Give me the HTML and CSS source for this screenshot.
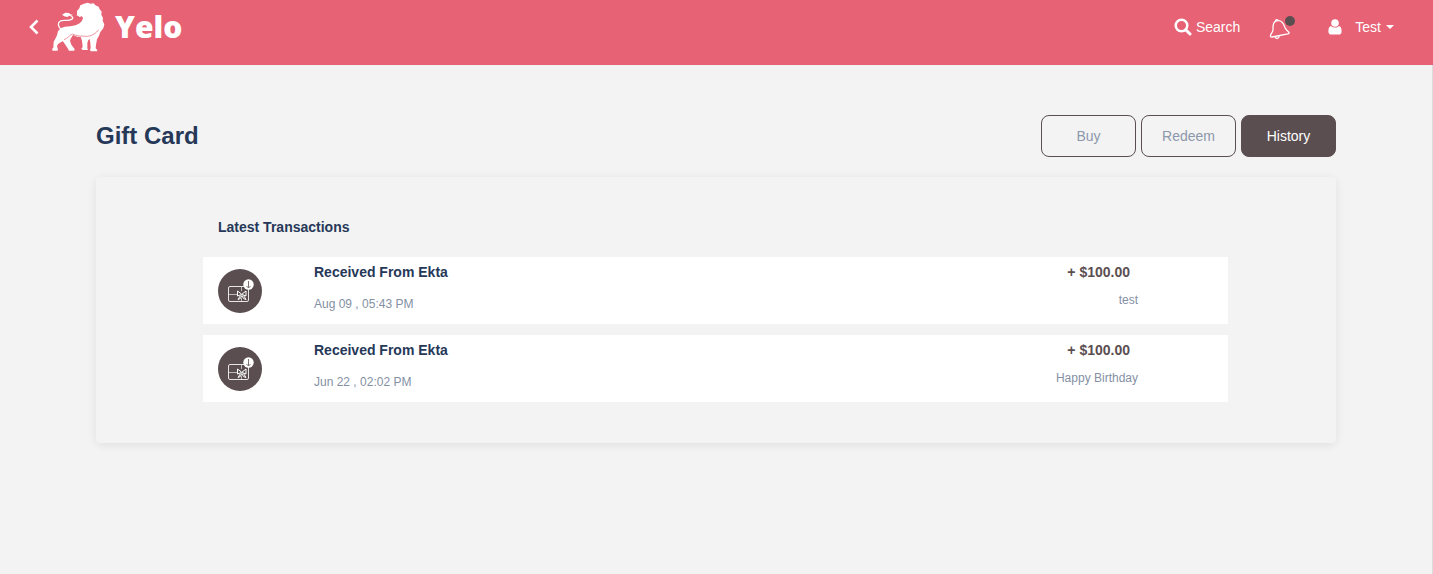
FILE: index.html
```
<!DOCTYPE html>
<html lang="en">
<head>
    <meta charset="UTF-8">
    <meta name="viewport" content="width=device-width, initial-scale=1">
    <title>Gift Card</title>
    <link rel="stylesheet" href="styles.css">
</head>
<body>

<!-- shared by every transaction row -->
<svg class="symbols" aria-hidden="true">
    <symbol id="gift-card" viewBox="0 0 44 44">
        <g fill="none" stroke="#fff" stroke-width="1">
            <rect x="10.5" y="17.500" width="20" height="15" rx="1.500" opacity=".85"/>
            <path d="M10.5 25.500H19M23.5 18V22M23.500 29V33" opacity=".6"/>
            <path d="M23.500 25L19.500 22V27L23.500 25.500L28 22V27L24 25.500M22.500 26.500L20 30.500L22.300 29.500L23.800 26.500L25.500 29.500L28 30.500L25.500 26.500"/>
        </g>
        <circle cx="30.500" cy="15.500" r="5.200" fill="#fff"/>
        <path d="M30.500 12V18.500M28.500 17L30.500 19L32.500 17" fill="none" stroke="#5b4e51" stroke-width=".8"/>
    </symbol>
</svg>

<header class="header">
    <div class="header-left">
        <a href="#" class="back" aria-label="Back">
            <svg width="10" height="16" viewBox="0 0 10 16"><path d="M8.500 1.500L2 8L8.500 14.500" fill="none" stroke="#fff" stroke-width="2.600"/></svg>
        </a>
        <a href="#" class="logo">
            <svg width="53" height="50" viewBox="156 8 159 150" aria-hidden="true">
                <g fill="#fff">
                    <path d="M231 45L231 35L238 27L241 18L252 13L263 10L272 13L281 12L286 18L296 22L299 30L305 37L304 46L309 56L308 64L313 75L310 87L301 98L297 109L291 120L288 136L287 147L292 152L291 156H272L270 151L272 146L271 131L269 119L265 122L262 131L262 147L264 152H248L244 148L248 143L246 124L242 113L231 112L219 107L212 118L210 124L214 136L222 147L224 149L223 154H207L202 145L191 129L188 126L175 133L171 140L174 151L172 154H158L156 149L160 145L161 127L166 118L171 108L174 96L182 87L194 82L211 81L227 78L239 72L246 64L249 56L246 51L238 53L235 49L230 49Z"/>
                    <path d="M186 46L196 40L207 41L211 45L219 47L208 49L202 53L193 51Z"/>
                </g>
                <path d="M209 48C219 50 221 58 213 61C203 66 190 60 181 65C172 70 174 81 182 89" fill="none" stroke="#fff" stroke-width="4"/>
                <path d="M192 121C202 118 208 108 217 104C232 112 248 110 263 111C278 109 288 102 296 91" fill="none" stroke="#e66274" stroke-width="2"/>
            </svg>
            <span class="logo-text">Yelo</span>
        </a>
    </div>
    <nav class="header-right">
        <a href="#" class="nav-link search">
            <svg width="18" height="18" viewBox="0 0 18 18" aria-hidden="true"><circle cx="7.500" cy="7.500" r="5.800" fill="none" stroke="#fff" stroke-width="2.500"/><path d="M11.700 11.700L16 16" stroke="#fff" stroke-width="3" stroke-linecap="round"/></svg>
            Search
        </a>
        <button type="button" class="bell" aria-label="Notifications">
            <svg width="22" height="22" viewBox="0 0 22 22" aria-hidden="true">
                <g fill="none" stroke="#fff" stroke-width="1.300" stroke-linejoin="round">
                    <path d="M6.400 3.400C3.200 5.500 4.200 9 4 12C3.800 14.500 1.400 16 1.400 18.200C1.500 19 2.200 19.100 3 19L18.800 15.800C20 15.500 20.500 14.800 19.600 14C18 12.800 16.800 11.800 15.800 9.200C14.800 6.300 13.600 2.500 9.200 2.700C8.100 2.700 7.200 2.900 6.400 3.400Z"/>
                    <path d="M6.500 3.300C6.300 1.400 8.800 .900 9.200 2.700M6 18.500C7 21.500 10 21 10.200 17.700"/>
                </g>
            </svg>
            <span class="bell-dot"></span>
        </button>
        <button type="button" class="nav-link user">
            <svg width="14" height="16" viewBox="0 0 14 16" aria-hidden="true"><g fill="#fff"><circle cx="7" cy="4" r="3.800"/><path d="M3 7C.800 7.500 .400 10 .400 12.500C.400 14.500 1.500 15.600 3.200 15.600H10.800C12.500 15.600 13.600 14.500 13.600 12.500C13.600 10 13.200 7.500 11 7C8.700 9 5.300 9 3 7Z"/></g></svg>
            <span>Test</span>
            <span class="caret"></span>
        </button>
    </nav>
</header>

<main class="page">
    <div class="page-top">
        <h1>Gift Card</h1>
        <div class="tabs">
            <button type="button" class="tab">Buy</button>
            <button type="button" class="tab">Redeem</button>
            <button type="button" class="tab active">History</button>
        </div>
    </div>

    <section class="panel">
        <h2>Latest Transactions</h2>
        <ul class="transactions">
            <li class="transaction">
                <span class="icon"><svg width="44" height="44" aria-hidden="true"><use href="#gift-card"/></svg></span>
                <div class="detail">
                    <h3>Received From Ekta</h3>
                    <p>Aug 09 , 05:43 PM</p>
                </div>
                <div class="amount">
                    <strong>+ $100.00</strong>
                    <p>test</p>
                </div>
            </li>
            <li class="transaction">
                <span class="icon"><svg width="44" height="44" aria-hidden="true"><use href="#gift-card"/></svg></span>
                <div class="detail">
                    <h3>Received From Ekta</h3>
                    <p>Jun 22 , 02:02 PM</p>
                </div>
                <div class="amount">
                    <strong>+ $100.00</strong>
                    <p>Happy Birthday</p>
                </div>
            </li>
        </ul>
    </section>
</main>

</body>
</html>
```
FILE: styles.css
```
*{
    margin: 0;
    padding: 0;
    box-sizing: border-box;
}

body{
    display: flex;
    flex-direction: column;
    min-height: 100vh;
    background-color: #f3f3f3;
    color: #263858;
    font-family: "Liberation Sans", Arial, sans-serif;
    font-size: 14px;
    line-height: 20px;
}

button{
    font: inherit;
    background: none;
    border: none;
    cursor: pointer;
}

a{
    color: inherit;
    text-decoration: none;
}

svg{
    display: block;
}

.symbols{
    display: none;
}

.header{
    display: flex;
    justify-content: space-between;
    align-items: center;
    height: 65px;
    padding: 0 39px 11px 29px;
    background-color: #e66274;
    color: #fff;
}

.header-left,
.header-right,
.logo,
.nav-link{
    display: flex;
    align-items: center;
}

.header-left{
    gap: 13px;
}

.logo{
    gap: 10px;
}

.logo-text{
    font-family: "Open Sans", sans-serif;
    font-size: 30px;
    font-weight: 800;
    line-height: 40px;
}

.nav-link{
    color: #fff;
}

.search{
    gap: 4px;
}

.bell{
    position: relative;
    margin: 3px 37px 0 29px;
}

.bell-dot{
    position: absolute;
    top: -2px;
    right: -4px;
    width: 10px;
    height: 10px;
    border-radius: 50%;
    background-color: #5b4e51;
}

.user svg{
    margin-right: 13px;
}

.caret{
    margin-left: 5px;
    border-top: 4px solid #fff;
    border-left: 4px solid transparent;
    border-right: 4px solid transparent;
}

.page{
    flex: 1;
    padding: 50px 96px;
    border-right: 1px solid #dcdcdc;
}

.page-top{
    display: flex;
    justify-content: space-between;
    align-items: center;
    margin-bottom: 20px;
}

h1{
    font-size: 24px;
    line-height: 30px;
}

.tabs{
    display: flex;
    gap: 5px;
}

.tab{
    width: 95px;
    height: 42px;
    border: 1px solid #5b4e51;
    border-radius: 8px;
    color: #8c98ab;
}

.tab.active{
    background-color: #5b4e51;
    color: #fff;
}

.panel{
    padding: 40px 108px 41px 107px;
    border-radius: 4px;
    box-shadow: 0 2px 10px rgba(0, 0, 0, 0.08);
}

h2{
    margin-bottom: 20px;
    padding-left: 15px;
    font-size: 14px;
}

.transactions{
    display: flex;
    flex-direction: column;
    gap: 11px;
    list-style: none;
}

.transaction{
    display: flex;
    align-items: flex-start;
    min-height: 67px;
    padding: 5px 90px 10px 15px;
    background-color: #fff;
}

.icon{
    margin: 7px 52px 0 0;
    border-radius: 50%;
    background-color: #5b4e51;
}

.detail{
    flex: 1;
}

h3{
    margin-bottom: 12px;
    font-size: 14px;
}

.transaction p{
    color: #8490a4;
    font-size: 12px;
}

.amount{
    text-align: right;
}

.amount strong{
    display: block;
    margin-bottom: 8px;
    padding-right: 8px;
    color: #5b4e51;
}
```
